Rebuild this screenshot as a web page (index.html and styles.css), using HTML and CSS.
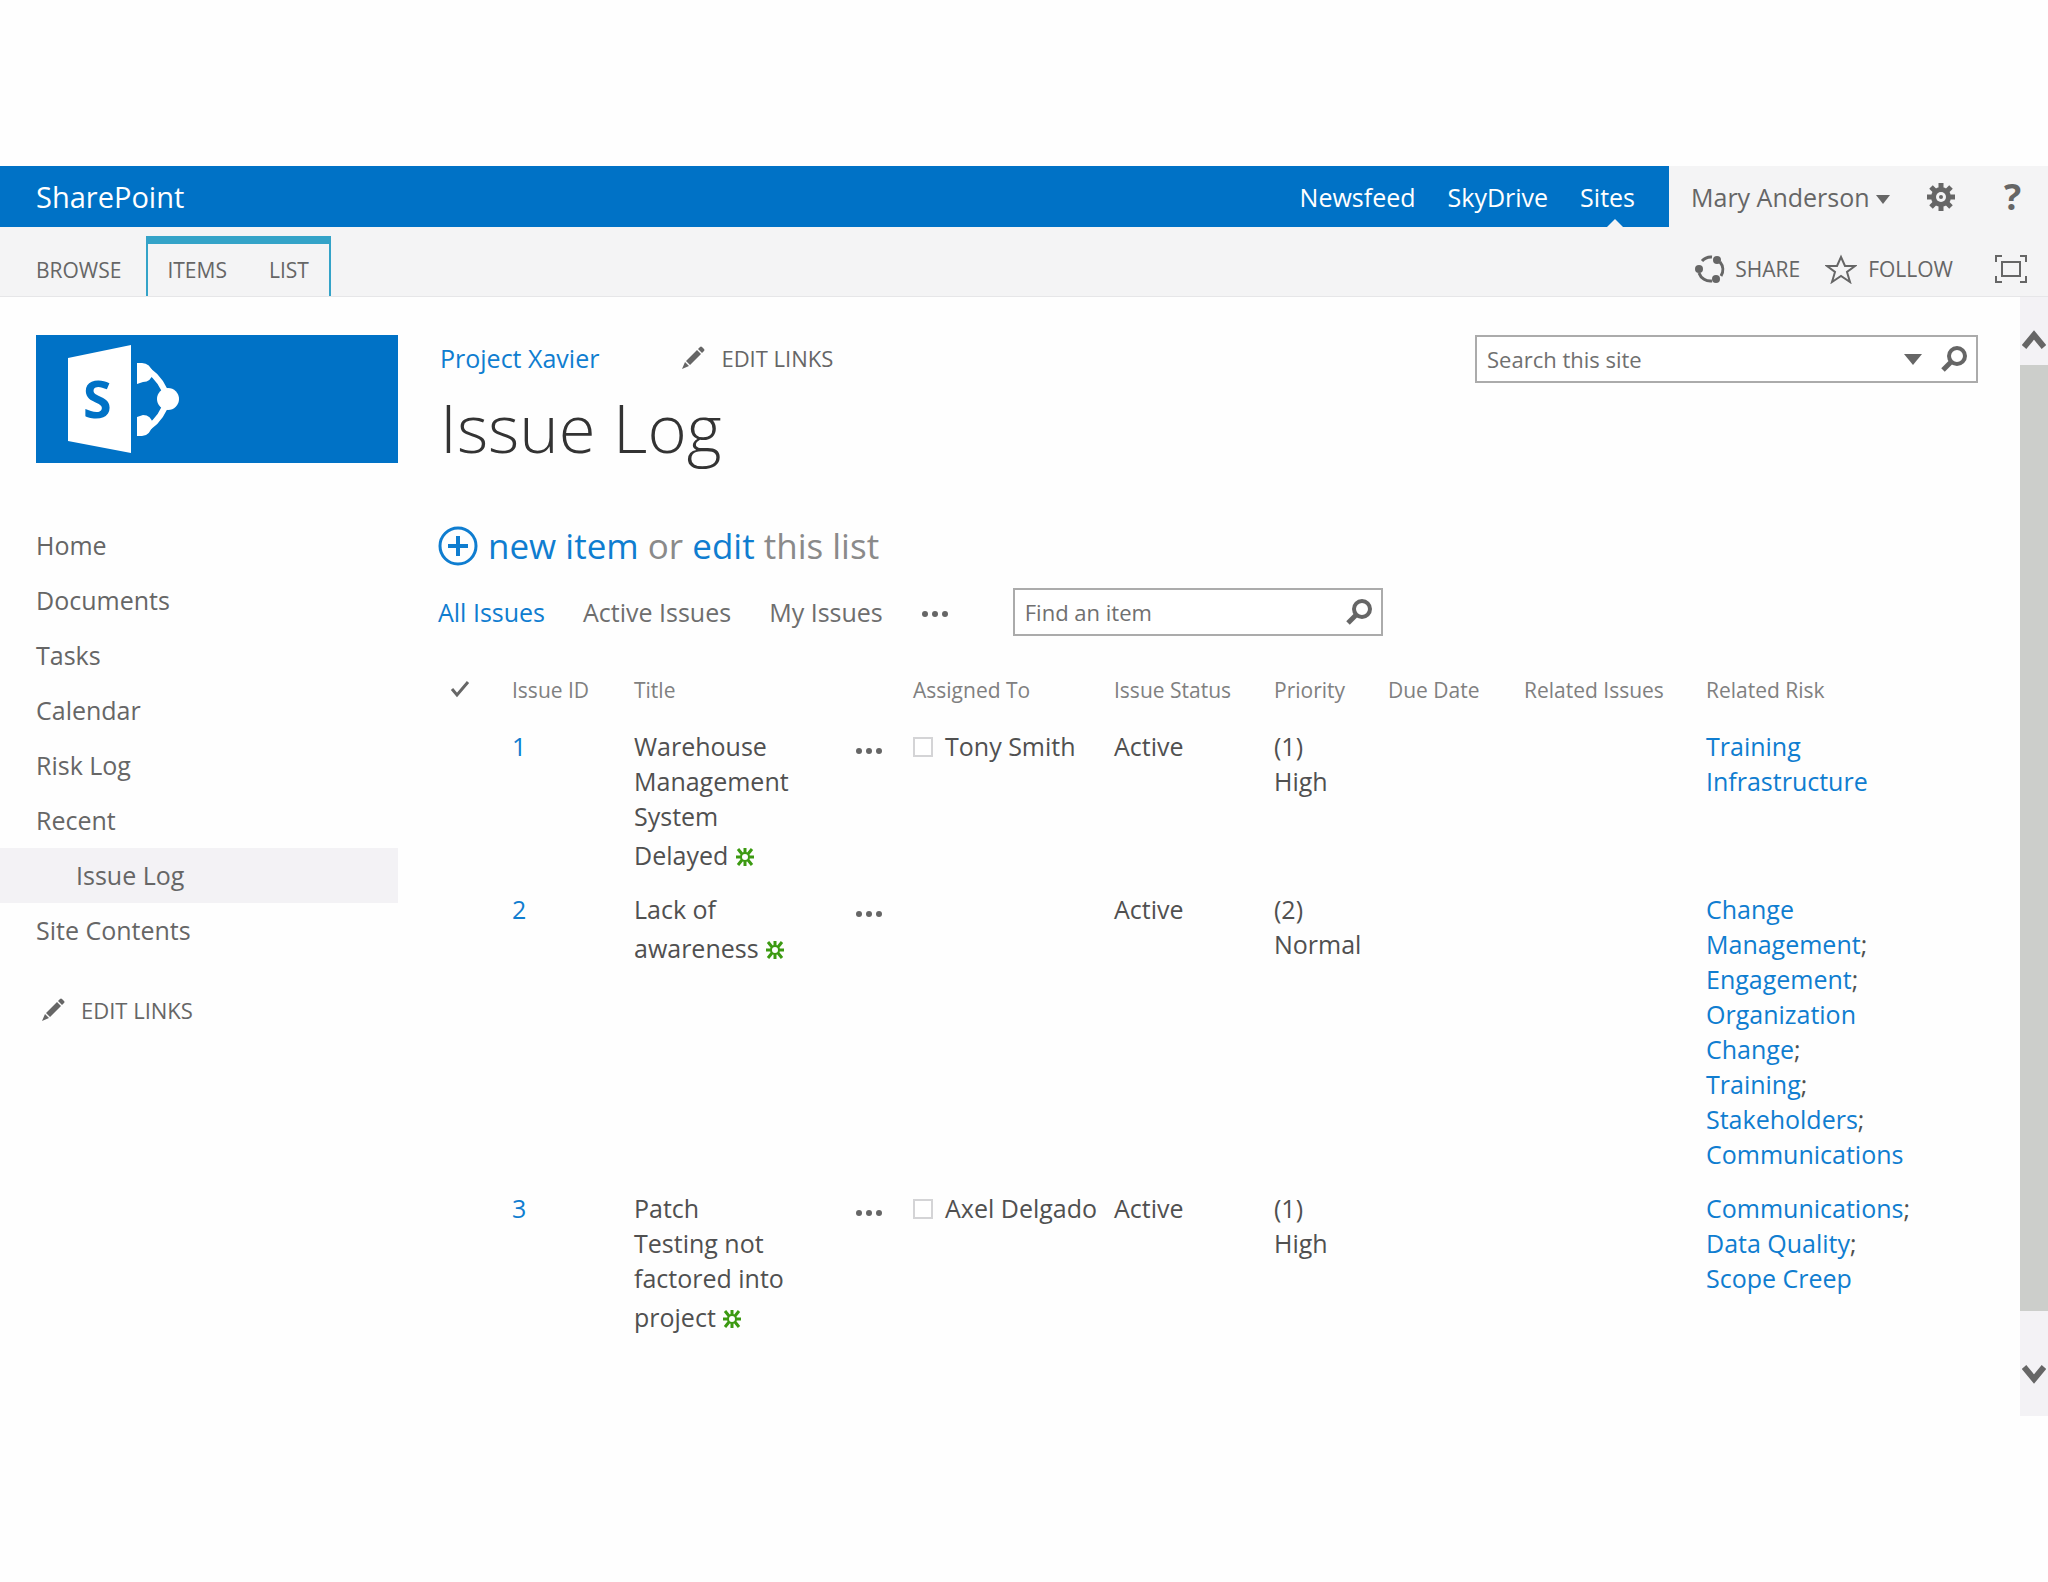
FILE: index.html
```html
<!DOCTYPE html>
<html lang="en">
<head>
<meta charset="UTF-8">
<meta name="viewport" content="width=device-width, initial-scale=1.0">
<title>Issue Log - Project Xavier</title>
<link rel="stylesheet" href="styles.css">
</head>
<body>

<!-- Icons used more than once -->
<svg class="defs" aria-hidden="true">
    <symbol id="pencil" viewBox="0 0 24 24">
        <path d="M1 23l3-7 4 4z M5 15L16 4l4 4L9 19z M17 3l2-2q1-1 2 0l2 2q1 1 0 2l-2 2z"/>
    </symbol>
    <symbol id="magnifier" viewBox="0 0 28 28">
        <circle cx="17" cy="11" r="8" fill="none" stroke="currentColor" stroke-width="4"/>
        <path d="M11 17L3 25" stroke="currentColor" stroke-width="5"/>
    </symbol>
    <symbol id="dots" viewBox="0 0 28 8">
        <circle cx="4" cy="4" r="3"/><circle cx="14" cy="4" r="3"/><circle cx="24" cy="4" r="3"/>
    </symbol>
    <symbol id="new" viewBox="0 0 20 20">
        <circle cx="10" cy="10" r="4" fill="none" stroke="currentColor" stroke-width="2"/>
        <path d="M10 1v5M10 14v5M1 10h5M14 10h5M3 2l4 5M17 2l-4 5M3 18l4-5M17 18l-4-5" stroke="currentColor" stroke-width="3"/>
    </symbol>
</svg>

<header>
    <div class="suite">
        <div class="suite-bar">
            <a href="#" class="brand">SharePoint</a>
            <nav class="suite-links">
                <a href="#">Newsfeed</a>
                <a href="#">SkyDrive</a>
                <a href="#" class="current">Sites</a>
            </nav>
        </div>
        <div class="suite-user">
            <button type="button" class="user">Mary Anderson
                <svg class="caret" width="14" height="9" viewBox="0 0 14 9"><path d="M0 0h14L7 9z"/></svg>
            </button>
            <button type="button" class="gear" aria-label="Settings">
                <svg width="30" height="30" viewBox="0 0 30 30">
                    <g stroke="currentColor" stroke-width="5"><path d="M15 1v28M1 15h28M5 5l20 20M25 5L5 25"/></g>
                    <circle cx="15" cy="15" r="10"/>
                    <circle cx="15" cy="15" r="5" fill="#f4f4f5"/>
                    <circle cx="15" cy="15" r="2"/>
                </svg>
            </button>
            <button type="button" class="help" aria-label="Help">?</button>
        </div>
    </div>

    <div class="ribbon">
        <a href="#" class="tab">BROWSE</a>
        <div class="tab-group">
            <a href="#" class="tab">ITEMS</a>
            <a href="#" class="tab">LIST</a>
        </div>
        <div class="ribbon-actions">
            <button type="button" class="share">
                <svg width="30" height="30" viewBox="0 0 30 30">
                    <path d="M7 7a12 12 0 0 1 10-4M25 8a12 12 0 0 1 1 14M17 27A12 12 0 0 1 4 19" fill="none" stroke="currentColor" stroke-width="3"/>
                    <circle cx="22" cy="6" r="4"/><circle cx="4" cy="15" r="4"/><circle cx="21" cy="25" r="4"/>
                </svg>
                SHARE
            </button>
            <button type="button" class="follow">
                <svg width="32" height="30" viewBox="0 0 32 30">
                    <path d="M16 3l4 9h10l-8 6 3 10-9-6-9 6 3-10-8-6h10z" fill="none" stroke="currentColor" stroke-width="2"/>
                </svg>
                FOLLOW
            </button>
            <button type="button" class="focus" aria-label="Focus on content">
                <svg class="outline" width="34" height="30" viewBox="0 0 34 30" stroke-width="2">
                    <path d="M2 8V2h6M26 2h6v6M32 22v6h-6M8 28H2v-6"/><path d="M8 8h18v14H8z"/>
                </svg>
            </button>
        </div>
    </div>
</header>

<div class="workspace">
    <aside class="sidebar">
        <a href="#" class="logo" aria-label="Site home">
            <svg width="160" height="128" viewBox="0 0 160 128">
                <path d="M32 23L95 10v108L32 106z" fill="#fff"/>
                <text x="47" y="83" class="logo-letter">S</text>
                <path d="M113 36Q126 45 132 64Q126 83 113 92" fill="none" stroke="#fff" stroke-width="6"/>
                <path d="M101 28h5q8 0 11 10-2 9-10 9l-6 2z M101 82l6-2q8 0 10 9-3 12-11 12h-5z" fill="#fff"/>
                <circle cx="132" cy="64" r="11" fill="#fff"/>
            </svg>
        </a>
        <nav class="quick-launch">
            <a href="#">Home</a>
            <a href="#">Documents</a>
            <a href="#">Tasks</a>
            <a href="#">Calendar</a>
            <a href="#">Risk Log</a>
            <a href="#">Recent</a>
            <a href="#" class="selected">Issue Log</a>
            <a href="#">Site Contents</a>
        </nav>
        <button type="button" class="edit-links"><svg class="pencil"><use href="#pencil"/></svg>EDIT LINKS</button>
    </aside>

    <main>
        <div class="title-row">
            <div>
                <div class="top-nav">
                    <a href="#" class="project">Project Xavier</a>
                    <button type="button" class="edit-links"><svg class="pencil"><use href="#pencil"/></svg>EDIT LINKS</button>
                </div>
                <h1>Issue Log</h1>
            </div>
            <form class="search site-search">
                <input type="text" placeholder="Search this site" aria-label="Search this site">
                <button type="button" aria-label="Search scope"><svg width="18" height="11" viewBox="0 0 18 11"><path d="M0 0h18L9 11z"/></svg></button>
                <button type="button" aria-label="Search"><svg class="magnifier"><use href="#magnifier"/></svg></button>
            </form>
        </div>

        <p class="new-item">
            <svg class="outline" width="40" height="40" viewBox="0 0 40 40">
                <circle cx="20" cy="20" r="18" stroke-width="3"/><path d="M20 10v20M10 20h20" stroke-width="4"/>
            </svg>
            <span><a href="#">new item</a> or <a href="#">edit</a> this list</span>
        </p>

        <div class="views">
            <a href="#" class="active">All Issues</a>
            <a href="#">Active Issues</a>
            <a href="#">My Issues</a>
            <button type="button" class="more" aria-label="More views"><svg class="dots"><use href="#dots"/></svg></button>
            <form class="search item-search">
                <input type="text" placeholder="Find an item" aria-label="Find an item">
                <button type="button" aria-label="Find"><svg class="magnifier"><use href="#magnifier"/></svg></button>
            </form>
        </div>

        <table>
            <colgroup>
                <col class="c-check"><col class="c-id"><col class="c-title"><col class="c-menu"><col class="c-assigned">
                <col class="c-status"><col class="c-priority"><col class="c-due"><col class="c-issues"><col>
            </colgroup>
            <thead>
                <tr>
                    <th class="check"><svg width="20" height="18" viewBox="0 0 20 18"><path d="M2 9l5 6L18 2" fill="none" stroke="currentColor" stroke-width="3"/></svg></th>
                    <th>Issue ID</th>
                    <th>Title</th>
                    <th></th>
                    <th>Assigned To</th>
                    <th>Issue Status</th>
                    <th>Priority</th>
                    <th>Due Date</th>
                    <th>Related Issues</th>
                    <th>Related Risk</th>
                </tr>
            </thead>
            <tbody>
                <tr>
                    <td></td>
                    <td><a href="#">1</a></td>
                    <td>Warehouse<br>Management<br>System<br>Delayed <svg class="new"><use href="#new"/></svg></td>
                    <td><button type="button" class="more" aria-label="Open menu"><svg class="dots"><use href="#dots"/></svg></button></td>
                    <td><label class="person"><input type="checkbox">Tony Smith</label></td>
                    <td>Active</td>
                    <td>(1)<br>High</td>
                    <td></td>
                    <td></td>
                    <td><a href="#">Training<br>Infrastructure</a></td>
                </tr>
                <tr>
                    <td></td>
                    <td><a href="#">2</a></td>
                    <td>Lack of<br>awareness <svg class="new"><use href="#new"/></svg></td>
                    <td><button type="button" class="more" aria-label="Open menu"><svg class="dots"><use href="#dots"/></svg></button></td>
                    <td></td>
                    <td>Active</td>
                    <td>(2)<br>Normal</td>
                    <td></td>
                    <td></td>
                    <td>
                        <a href="#">Change<br>Management</a>;<br>
                        <a href="#">Engagement</a>;<br>
                        <a href="#">Organization<br>Change</a>;<br>
                        <a href="#">Training</a>;<br>
                        <a href="#">Stakeholders</a>;<br>
                        <a href="#">Communications</a>
                    </td>
                </tr>
                <tr>
                    <td></td>
                    <td><a href="#">3</a></td>
                    <td>Patch<br>Testing not<br>factored into<br>project <svg class="new"><use href="#new"/></svg></td>
                    <td><button type="button" class="more" aria-label="Open menu"><svg class="dots"><use href="#dots"/></svg></button></td>
                    <td><label class="person"><input type="checkbox">Axel Delgado</label></td>
                    <td>Active</td>
                    <td>(1)<br>High</td>
                    <td></td>
                    <td></td>
                    <td>
                        <a href="#">Communications</a>;<br>
                        <a href="#">Data Quality</a>;<br>
                        <a href="#">Scope Creep</a>
                    </td>
                </tr>
            </tbody>
        </table>
    </main>

    <div class="scrollbar">
        <button type="button" aria-label="Scroll up"><svg width="24" height="20" viewBox="0 0 24 20"><path d="M2 17L12 5l10 12" fill="none" stroke="currentColor" stroke-width="6"/></svg></button>
        <div class="thumb"></div>
        <button type="button" class="down" aria-label="Scroll down"><svg width="24" height="20" viewBox="0 0 24 20"><path d="M2 3l10 12L22 3" fill="none" stroke="currentColor" stroke-width="6"/></svg></button>
    </div>
</div>

</body>
</html>
```

FILE: styles.css
```css
* {
    box-sizing: border-box;
}
body {
    margin: 0;
    padding-top: 166px;
    background-color: #fefefe;
    color: #505050;
    font-family: "Open Sans", "Noto Sans", sans-serif;
    font-size: 25px;
    line-height: 34px;
}
a {
    color: #0f7dd0;
    text-decoration: none;
}
button {
    display: flex;
    align-items: center;
    margin: 0;
    padding: 0;
    border: none;
    background: none;
    color: #666;
    font: inherit;
}
svg {
    fill: currentColor;
    flex: none;
}
.outline {
    fill: none;
    stroke: currentColor;
}
.defs {
    display: none;
}

/* Top bar */
.suite {
    display: flex;
    height: 61px;
    background-color: #f4f4f5;
}
.suite-bar {
    flex: 1;
    display: flex;
    justify-content: space-between;
    align-items: center;
    padding: 0 34px 0 36px;
    background-color: #0072c6;
}
.suite-bar a {
    color: #fff;
}
.suite-bar .brand {
    font-size: 29px;
}
.suite-links {
    display: flex;
    align-self: stretch;
    gap: 32px;
}
.suite-links a {
    position: relative;
    line-height: 62px;
}
.suite-links .current::after {
    content: "";
    position: absolute;
    bottom: 0;
    left: 27px;
    border: 8px solid transparent;
    border-top: none;
    border-bottom-color: #f4f4f5;
}
.suite-user {
    display: flex;
    align-items: center;
    width: 379px;
    padding-left: 22px;
}
.user {
    width: 235px;
    gap: 6px;
}
.caret {
    margin-top: 6px;
}
.gear {
    width: 78px;
}
.help {
    font-size: 36px;
    font-weight: 700;
}

/* Ribbon */
.ribbon {
    display: flex;
    align-items: flex-end;
    height: 70px;
    padding: 0 20px 0 36px;
    border-bottom: 1px solid #e6e6e8;
    background-color: #f4f4f5;
    font-size: 21px;
}
.tab {
    color: #666;
    line-height: 52px;
}
.tab-group {
    display: flex;
    gap: 42px;
    margin-left: 25px;
    padding: 0 20px 0 19px;
    border: 2px solid #34a3c8;
    border-top-width: 8px;
    border-bottom: none;
}
.ribbon-actions {
    display: flex;
    align-self: center;
    margin-left: auto;
    padding-top: 14px;
    height: 70px;
}
.share {
    gap: 10px;
    margin-right: 25px;
}
.follow {
    gap: 11px;
    margin-right: 41px;
}

/* Page body */
.workspace {
    display: flex;
}
.sidebar {
    width: 398px;
    padding-top: 38px;
}
.logo {
    display: block;
    height: 128px;
    margin-left: 36px;
    background-color: #0072c6;
}
.logo-letter {
    fill: #0072c6;
    font-size: 52px;
    font-weight: 700;
}
.quick-launch {
    margin-top: 55px;
}
.quick-launch a {
    display: block;
    padding-left: 36px;
    color: #666;
    line-height: 55px;
}
.quick-launch .selected {
    padding-left: 76px;
    background-color: #f3f2f5;
}
.edit-links {
    font-size: 22px;
}
.pencil {
    width: 24px;
    height: 24px;
    margin-right: 16px;
}
.sidebar .edit-links {
    margin: 35px 0 0 41px;
}
main {
    flex: 1;
    padding: 38px 42px 62px 40px;
}
.title-row {
    display: flex;
    justify-content: space-between;
    align-items: flex-start;
    padding-left: 2px;
}
.top-nav {
    display: flex;
    gap: 82px;
    margin-top: 6px;
}
h1 {
    margin: 0;
    color: #333;
    font-size: 67px;
    font-weight: 300;
    line-height: 104px;
}
.search {
    display: flex;
    align-items: center;
    height: 48px;
    border: 2px solid #ababab;
    background-color: #fff;
}
.search input {
    flex: 1;
    min-width: 0;
    padding: 0 10px;
    border: none;
    outline: none;
    background: none;
    font: inherit;
    font-size: 22px;
}
.search input::placeholder {
    color: #707070;
    opacity: 1;
}
.site-search {
    width: 503px;
}
.item-search {
    width: 370px;
    margin-left: 64px;
}
.magnifier {
    width: 28px;
    height: 28px;
    margin: 0 8px 0 18px;
}
.new-item {
    display: flex;
    align-items: center;
    gap: 10px;
    margin: 40px 0 0;
    color: #8a8a8a;
    font-size: 35px;
    line-height: 54px;
}
.new-item svg {
    color: #0f7dd0;
}
.views {
    display: flex;
    align-items: center;
    margin-top: 15px;
}
.views > a {
    margin-right: 38px;
    color: #6e6e6e;
}
.views > .active {
    color: #0f7dd0;
}
.more {
    height: 34px;
    padding-top: 4px;
}
.dots {
    width: 28px;
    height: 8px;
}

/* Issue list */
table {
    width: 100%;
    margin-top: 37px;
    border-collapse: collapse;
    table-layout: fixed;
}
th, td {
    padding: 0;
    text-align: left;
    vertical-align: top;
    white-space: nowrap;
}
th {
    padding-bottom: 22px;
    color: #808080;
    font-size: 21px;
    font-weight: 400;
}
.check {
    padding-left: 12px;
    color: #666;
}
td {
    padding-bottom: 19px;
    line-height: 35px;
}
td .more {
    padding-top: 9px;
}
.c-check { width: 74px; }
.c-id { width: 122px; }
.c-title { width: 221px; }
.c-menu { width: 58px; }
.c-assigned { width: 201px; }
.c-status { width: 160px; }
.c-priority { width: 114px; }
.c-due { width: 136px; }
.c-issues { width: 182px; }
.new {
    width: 20px;
    height: 20px;
    margin-top: 13px;
    color: #3c9a12;
    vertical-align: -2px;
}
.person {
    display: flex;
    align-items: center;
    gap: 12px;
}
.person input {
    appearance: none;
    width: 20px;
    height: 20px;
    margin: 0;
    border: 2px solid #d4d4d6;
    background-color: #fff;
}

/* Scrollbar */
.scrollbar {
    display: flex;
    flex-direction: column;
    width: 28px;
    background-color: #f3f2f5;
}
.scrollbar button {
    justify-content: center;
    height: 68px;
    padding-top: 18px;
}
.scrollbar .down {
    height: 105px;
    padding-top: 20px;
}
.thumb {
    flex: 1;
    background-color: #cccecb;
}
```
